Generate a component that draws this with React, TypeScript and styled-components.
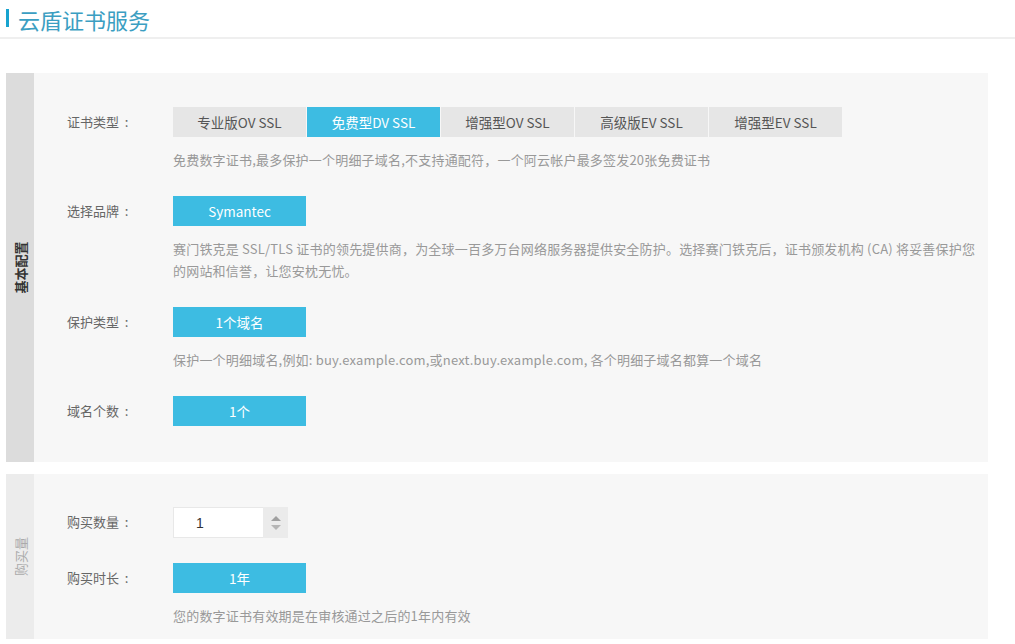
import React, { useState } from "react";
import styled, { createGlobalStyle } from "styled-components";

const GlobalStyle = createGlobalStyle`
  html, body {
    margin: 0;
    padding: 0;
    background: #fff;
    font-family: "Noto Sans CJK SC", "Liberation Sans", sans-serif;
  }
`;

const Page = styled.div`
  width: 1015px;
  height: 644px;
  overflow: hidden;
  background: #fff;
`;

const Header = styled.div`
  display: flex;
  align-items: center;
  height: 39px;
  padding-left: 6px;
  border-bottom: 2px solid #efefef;
  box-sizing: border-box;
`;

const TitleBar = styled.span`
  width: 3px;
  height: 18px;
  background: #17a3cf;
  margin-right: 9px;
  margin-top: -1px;
`;

const Title = styled.h1`
  margin: 0;
  font-size: 22px;
  font-weight: 400;
  color: #3b9ec2;
  line-height: 1;
`;

const Sections = styled.div`
  display: flex;
  flex-direction: column;
  gap: 12px;
  padding: 34px 27px 0 6px;
`;

const Section = styled.section`
  display: flex;
  background: #f7f7f7;
`;

const Side = styled.div<{ $dim?: boolean }>`
  width: 28px;
  flex-shrink: 0;
  background: ${(p) => (p.$dim ? "#ececec" : "#dcdcdc")};
  display: flex;
  align-items: center;
  justify-content: center;
`;

const SideText = styled.span<{ $dim?: boolean }>`
  transform: rotate(-90deg);
  white-space: nowrap;
  font-size: 13px;
  font-weight: ${(p) => (p.$dim ? 400 : 700)};
  color: ${(p) => (p.$dim ? "#aaa" : "#333")};
`;

const Body = styled.div<{ $pt: number; $pb: number }>`
  flex: 1;
  display: flex;
  flex-direction: column;
  gap: 25px;
  padding: ${(p) => p.$pt}px 0 ${(p) => p.$pb}px 33px;
`;

const Row = styled.div`
  display: grid;
  grid-template-columns: 106px 1fr;
`;

const Label = styled.div`
  height: 30px;
  line-height: 30px;
  font-size: 13px;
  color: #666;
  white-space: pre;
`;

const Content = styled.div`
  display: flex;
  flex-direction: column;
  align-items: flex-start;
`;

const Options = styled.div`
  display: flex;
  gap: 1px;
`;

const Option = styled.button<{ $active?: boolean }>`
  width: 133px;
  height: 30px;
  border: none;
  padding: 0;
  font-family: inherit;
  font-size: 13.5px;
  cursor: pointer;
  background: ${(p) => (p.$active ? "#3dbce2" : "#e6e6e6")};
  color: ${(p) => (p.$active ? "#fff" : "#555")};
`;

const Desc = styled.p`
  margin: 12px 0 0;
  font-size: 13px;
  letter-spacing: 0.2px;
  line-height: 22px;
  color: #999;
  max-width: 808px;
`;

const Stepper = styled.div`
  display: flex;
  height: 31px;
`;

const NumInput = styled.input`
  width: 90px;
  height: 31px;
  box-sizing: border-box;
  border: 1px solid #e8e8e8;
  border-right: none;
  padding: 0 0 0 22px;
  font-family: "Liberation Sans", sans-serif;
  font-size: 14px;
  color: #333;
  background: #fff;
  outline: none;
`;

const Spin = styled.div`
  width: 25px;
  height: 31px;
  background: #ebebeb;
  display: flex;
  flex-direction: column;
  align-items: center;
  justify-content: center;
  gap: 4px;
`;

const Arrow = styled.span<{ $down?: boolean }>`
  width: 0;
  height: 0;
  border-left: 5px solid transparent;
  border-right: 5px solid transparent;
  ${(p) =>
    p.$down ? "border-top: 5px solid #b5b5b5;" : "border-bottom: 5px solid #a0a0a0;"}
`;

const certTypes = ["专业版OV SSL", "免费型DV SSL", "增强型OV SSL", "高级版EV SSL", "增强型EV SSL"];

export default function App() {
  const [cert, setCert] = useState(1);
  const [qty, setQty] = useState("1");

  return (
    <Page>
      <GlobalStyle />
      <Header>
        <TitleBar />
        <Title>云盾证书服务</Title>
      </Header>
      <Sections>
        <Section>
          <Side>
            <SideText>基本配置</SideText>
          </Side>
          <Body $pt={34} $pb={36}>
            <Row>
              <Label>证书类型  :</Label>
              <Content>
                <Options>
                  {certTypes.map((t, i) => (
                    <Option key={t} $active={i === cert} onClick={() => setCert(i)}>
                      {t}
                    </Option>
                  ))}
                </Options>
                <Desc>免费数字证书,最多保护一个明细子域名,不支持通配符，一个阿云帐户最多签发20张免费证书</Desc>
              </Content>
            </Row>
            <Row>
              <Label>选择品牌  :</Label>
              <Content>
                <Option $active>Symantec</Option>
                <Desc>
                  赛门铁克是 SSL/TLS 证书的领先提供商，为全球一百多万台网络服务器提供安全防护。选择赛门铁克后，证书颁发机构 (CA) 将妥善保护您的网站和信誉，让您安枕无忧。
                </Desc>
              </Content>
            </Row>
            <Row>
              <Label>保护类型  :</Label>
              <Content>
                <Option $active>1个域名</Option>
                <Desc>保护一个明细域名,例如: buy.example.com,或next.buy.example.com, 各个明细子域名都算一个域名</Desc>
              </Content>
            </Row>
            <Row>
              <Label>域名个数  :</Label>
              <Content>
                <Option $active>1个</Option>
              </Content>
            </Row>
          </Body>
        </Section>
        <Section>
          <Side $dim>
            <SideText $dim>购买量</SideText>
          </Side>
          <Body $pt={33} $pb={12}>
            <Row>
              <Label>购买数量  :</Label>
              <Content>
                <Stepper>
                  <NumInput value={qty} onChange={(e) => setQty(e.target.value)} />
                  <Spin>
                    <Arrow />
                    <Arrow $down />
                  </Spin>
                </Stepper>
              </Content>
            </Row>
            <Row>
              <Label>购买时长  :</Label>
              <Content>
                <Option $active>1年</Option>
                <Desc>您的数字证书有效期是在审核通过之后的1年内有效</Desc>
              </Content>
            </Row>
          </Body>
        </Section>
      </Sections>
    </Page>
  );
}
